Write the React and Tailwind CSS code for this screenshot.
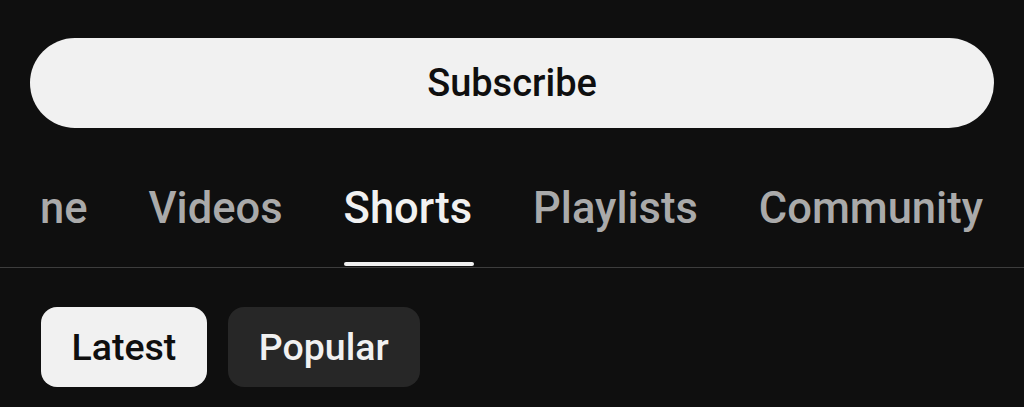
export default function App() {
  const tabs = ["ne", "Videos", "Shorts", "Playlists", "Community"];
  const active = "Shorts";

  return (
    <div className="w-[1024px] h-[407px] overflow-hidden bg-[#0f0f0f] font-['Roboto',sans-serif]">
      <div className="px-[30px] pt-[38px]">
        <button className="w-full h-[90px] rounded-full bg-[#f1f1f1] text-[38px] font-medium text-[#0f0f0f]">
          Subscribe
        </button>
      </div>

      <div className="mt-[22px] border-b border-[#3d3d3d]">
        <div className="flex gap-[61px] pl-[40px] h-[117px] whitespace-nowrap">
          {tabs.map((t) => (
            <div
              key={t}
              className={`relative flex items-center text-[43.5px] font-medium ${
                t === active ? "text-[#f1f1f1]" : "text-[#aaaaaa]"
              }`}
            >
              {t}
              {t === active && (
                <span className="absolute left-0 right-[-2px] bottom-[1px] h-[4px] rounded-full bg-[#f1f1f1]" />
              )}
            </div>
          ))}
        </div>
      </div>

      <div className="flex gap-[21px] pl-[41px] mt-[39px]">
        <button className="h-[80px] px-[30.5px] rounded-[16px] bg-[#f1f1f1] text-[37.5px] font-medium text-[#0f0f0f]">
          Latest
        </button>
        <button className="h-[80px] px-[31px] rounded-[16px] bg-[#272727] text-[37.5px] font-medium text-[#f1f1f1]">
          Popular
        </button>
      </div>
    </div>
  );
}
